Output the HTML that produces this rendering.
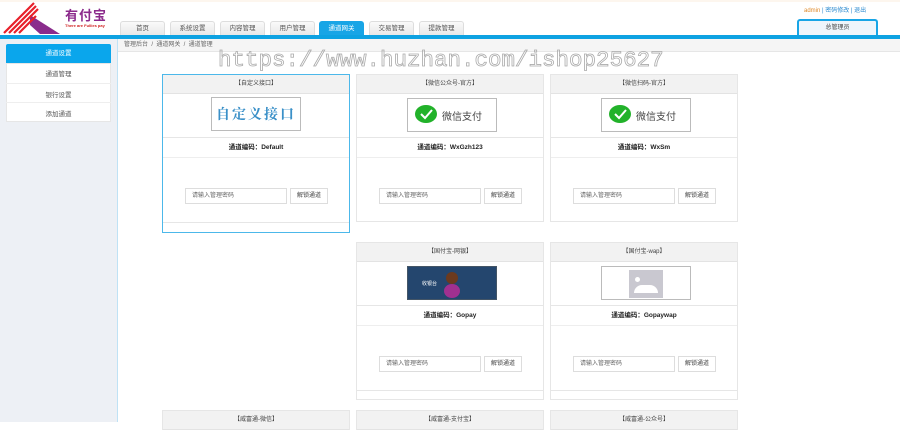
<!DOCTYPE html>
<html><head><meta charset="utf-8"><style>
*{margin:0;padding:0;box-sizing:border-box}
body{width:900px;height:422px;overflow:hidden;background:#fff;font-family:"Liberation Sans","Noto Sans CJK SC",sans-serif;font-size:7px;color:#333;position:relative}
.a{position:absolute}
.tab{position:absolute;top:21px;height:14px;width:45px;background:linear-gradient(#fafafa,#e8e8e8);border:1px solid #ddd;border-bottom:none;border-radius:3px 3px 0 0;text-align:center;line-height:14px;font-size:6.5px;color:#555}
.card{position:absolute;width:188px;border:1px solid #e6e6e6;background:#fff}
.card .h{height:19px;background:#f2f2f2;border-bottom:1px solid #e3e3e3;text-align:center;line-height:19px;font-size:6px;color:#444}
.card .img{height:44px;border-bottom:1px solid #e6e6e6;position:relative}
.card .t{height:20px;border-bottom:1px solid #eee;text-align:center;line-height:20px;font-size:6.5px;color:#222;font-weight:bold}
.card .b{height:65px;position:relative;border-bottom:1px solid #e6e6e6}
.card .f{height:11px;background:#fff}
.inp{position:absolute;top:30px;left:22px;width:102px;height:16px;border:1px solid #ddd;font-size:6px;line-height:14px;padding-left:6px;color:#666}
.btn{position:absolute;top:30px;left:127px;width:38px;height:16px;border:1px solid #ddd;font-size:6px;line-height:14px;text-align:center;color:#444}
.pic{position:absolute;left:50px;top:4px;width:90px;height:34px;border:1px solid #bbb;background:#fff}
</style></head><body>
<div class="a" style="left:0;top:0;width:900px;height:2px;background:#fdf6ee"></div>
<svg class="a" style="left:2px;top:1px" width="58" height="34" viewBox="0 0 58 34">
<polygon points="28,14 58,33 38,33 28,24" fill="#8a2c8c"/>
<path d="M2 32 L32 2 M7 32 L34 5 M12 32 L36 8 M17 32 L34 15" stroke="#e8202a" stroke-width="2.2"/>
</svg>
<div class="a" style="left:65px;top:5px;font-size:13px;font-weight:bold;color:#8b2a8b;letter-spacing:1px">有付宝</div>
<div class="a" style="left:65px;top:23px;font-size:4px;color:#d02020;font-weight:bold">There are Fullies pay</div>
<div class="tab" style="left:120px">首页</div>
<div class="tab" style="left:170px">系统设置</div>
<div class="tab" style="left:220px">内容管理</div>
<div class="tab" style="left:270px">用户管理</div>
<div class="tab" style="left:319px;background:#18a5e6;color:#fff;border-color:#18a5e6">通道网关</div>
<div class="tab" style="left:369px">交易管理</div>
<div class="tab" style="left:419px">提款管理</div>
<div class="a" style="left:804px;top:5px;font-size:6px;color:#2a8ad0"><span style="color:#e08a2a">admin</span> | 密码修改 | 退出</div>
<div class="a" style="left:797px;top:19px;width:81px;height:17px;border:2px solid #18a5e6;border-bottom:none;border-radius:3px 3px 0 0;background:#eef5fb;text-align:center;line-height:15px;font-size:6px;color:#444">总管理员</div>
<div class="a" style="left:0;top:35px;width:900px;height:4px;background:#0ea2e2"></div>
<div class="a" style="left:0;top:39px;width:118px;height:383px;background:#edf0f5;border-right:1px solid #bfe2f5"></div>
<div class="a" style="left:6px;top:44px;width:105px;height:19px;background:#0aa6ec;color:#fff;text-align:center;line-height:19px;font-size:6.5px;border-radius:2px 2px 0 0">通道设置</div>
<div class="a" style="left:6px;top:63px;width:105px;height:59px;background:#fff;border:1px solid #e6e6e6"></div>
<div class="a" style="left:6px;top:68px;width:105px;text-align:center;font-size:6.5px;color:#555">通道管理</div>
<div class="a" style="left:6px;top:83px;width:105px;border-top:1px solid #eee;padding-top:5px;text-align:center;font-size:6.5px;color:#555">银行设置</div>
<div class="a" style="left:6px;top:102px;width:105px;border-top:1px solid #eee;padding-top:5px;text-align:center;font-size:6.5px;color:#555">添加通道</div>
<div class="a" style="left:118px;top:39px;width:782px;height:13px;background:#f5f5f5;border-bottom:1px solid #e6e6e6;font-size:6px;color:#666;line-height:13px;padding-left:6px">管理后台 &nbsp;/&nbsp; 通道网关 &nbsp;/&nbsp; 通道管理</div>
<div class="card" style="left:162px;top:74px;border-color:#4cb8ea;height:159px">
<div class="h">【自定义接口】</div>
<div class="img"><div class="pic" style="left:48px;top:3px;font-size:14px;font-weight:bold;color:#3a90c8;text-align:center;line-height:32px;letter-spacing:2px;font-family:'Noto Serif CJK SC',serif">自定义接口</div></div>
<div class="t">通道编码：Default</div>
<div class="b"><div class="inp">请输入管理密码</div><div class="btn">解锁通道</div></div>
</div>
<div class="card" style="left:356px;top:74px;height:148px">
<div class="h">【微信公众号-官方】</div>
<div class="img"><div class="pic"><svg class="a" style="left:7px;top:6px" width="22" height="20" viewBox="0 0 22 20"><ellipse cx="11" cy="9" rx="11" ry="9" fill="#22b22a"/><path d="M6 9 L10 13 L17 5" stroke="#fff" stroke-width="2" fill="none"/></svg><div class="a" style="left:34px;top:9px;font-size:10px;color:#444">微信支付</div></div></div>
<div class="t">通道编码：WxGzh123</div>
<div class="b" style="border:none"><div class="inp">请输入管理密码</div><div class="btn">解锁通道</div></div>
</div>
<div class="card" style="left:550px;top:74px;height:148px">
<div class="h">【微信扫码-官方】</div>
<div class="img"><div class="pic"><svg class="a" style="left:7px;top:6px" width="22" height="20" viewBox="0 0 22 20"><ellipse cx="11" cy="9" rx="11" ry="9" fill="#22b22a"/><path d="M6 9 L10 13 L17 5" stroke="#fff" stroke-width="2" fill="none"/></svg><div class="a" style="left:34px;top:9px;font-size:10px;color:#444">微信支付</div></div></div>
<div class="t">通道编码：WxSm</div>
<div class="b" style="border:none"><div class="inp">请输入管理密码</div><div class="btn">解锁通道</div></div>
</div>
<div class="card" style="left:356px;top:242px;height:158px">
<div class="h">【国付宝-网银】</div>
<div class="img"><div class="pic" style="background:#24466e;border-color:#456"><div class="a" style="left:38px;top:5px;width:12px;height:12px;border-radius:50%;background:#6b3a1e"></div><div class="a" style="left:36px;top:17px;width:16px;height:14px;border-radius:50%;background:#a03090"></div><div class="a" style="left:14px;top:13px;font-size:5px;color:#fff">收银台</div></div></div>
<div class="t">通道编码：Gopay</div>
<div class="b"><div class="inp">请输入管理密码</div><div class="btn">解锁通道</div></div>
</div>
<div class="card" style="left:550px;top:242px;height:158px">
<div class="h">【国付宝-wap】</div>
<div class="img"><div class="pic"><div class="a" style="left:27px;top:3px;width:34px;height:28px;background:#c9c8d0"></div><div class="a" style="left:32px;top:18px;width:24px;height:8px;background:#fff;border-radius:10px 10px 0 0"></div><div class="a" style="left:33px;top:10px;width:5px;height:5px;border-radius:50%;background:#fff"></div></div></div>
<div class="t">通道编码：Gopaywap</div>
<div class="b"><div class="inp">请输入管理密码</div><div class="btn">解锁通道</div></div>
</div>
<div class="card" style="left:162px;top:410px;height:20px"><div class="h">【威富通-微信】</div></div>
<div class="card" style="left:356px;top:410px;height:20px"><div class="h">【威富通-支付宝】</div></div>
<div class="card" style="left:550px;top:410px;height:20px"><div class="h">【威富通-公众号】</div></div>
<div class="a" style="left:218px;top:47px;font-family:'Liberation Mono',monospace;font-size:22.5px;color:transparent;-webkit-text-stroke:0.8px #aaa;white-space:nowrap">https://www.huzhan.com/ishop25627</div>
</body></html>
